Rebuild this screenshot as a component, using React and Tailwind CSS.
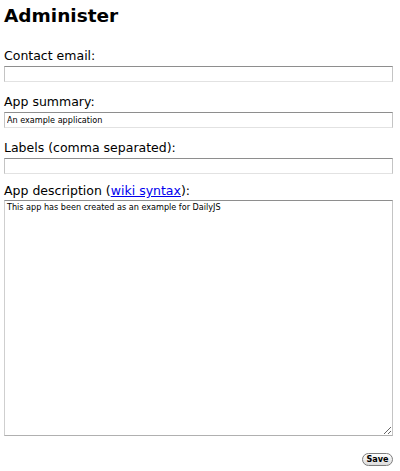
export default function App() {
  return (
    <div className="min-h-[471px] bg-white px-[4px] pt-[4px] text-black [font-family:'DejaVu_Sans',Verdana,sans-serif]">
      {/* HEADING */}
      <h1 className="text-[18.5px] leading-[24px] font-bold">Administer</h1>

      <form className="w-[389px]" onSubmit={(e) => e.preventDefault()}>
        <Field label="Contact email:" className="mt-[20px]" />
        <Field label="App summary:" value="An example application" className="mt-[12px]" />
        <Field label="Labels (comma separated):" className="mt-[12px]" />

        {/* DESCRIPTION */}
        <div className="mt-[9px]">
          <label className="block text-[12.5px] leading-[16px]">
            App description (
            <a href="#" className="text-[#0000ee] underline">
              wiki syntax
            </a>
            ):
          </label>
          <textarea
            defaultValue="This app has been created as an example for DailyJS"
            className="mt-[1px] block h-[236px] w-[389px] border border-t-[#8e8e8e] border-r-[#c4c4c4] border-b-[#b0b0b0] border-l-[#cfcfcf] px-[2px] py-[1px] text-[9px] leading-[11px] outline-none [font-family:'DejaVu_Sans_Condensed','DejaVu_Sans',sans-serif] [font-stretch:condensed]"
          />
        </div>

        {/* SAVE */}
        <div className="mt-[17px] flex justify-end">
          <button
            type="submit"
            className="flex h-[13px] w-[31px] items-center justify-center rounded-full border border-[#7d7d7d] bg-gradient-to-b from-white to-[#dcdcdc] text-[9px] font-bold leading-none [font-family:'DejaVu_Sans_Condensed','DejaVu_Sans',sans-serif] [font-stretch:condensed]"
          >
            Save
          </button>
        </div>
      </form>
    </div>
  );
}

function Field({ label, value = "", className = "" }) {
  return (
    <div className={className}>
      <label className="block text-[12.5px] leading-[16px]">{label}</label>
      <input
        type="text"
        defaultValue={value}
        className="mt-[2px] block h-[16px] w-[389px] border border-t-[#8e8e8e] border-r-[#c4c4c4] border-b-[#e2e2e2] border-l-[#c4c4c4] px-[2px] text-[9px] leading-[14px] outline-none [font-family:'DejaVu_Sans_Condensed','DejaVu_Sans',sans-serif] [font-stretch:condensed]"
      />
    </div>
  );
}
